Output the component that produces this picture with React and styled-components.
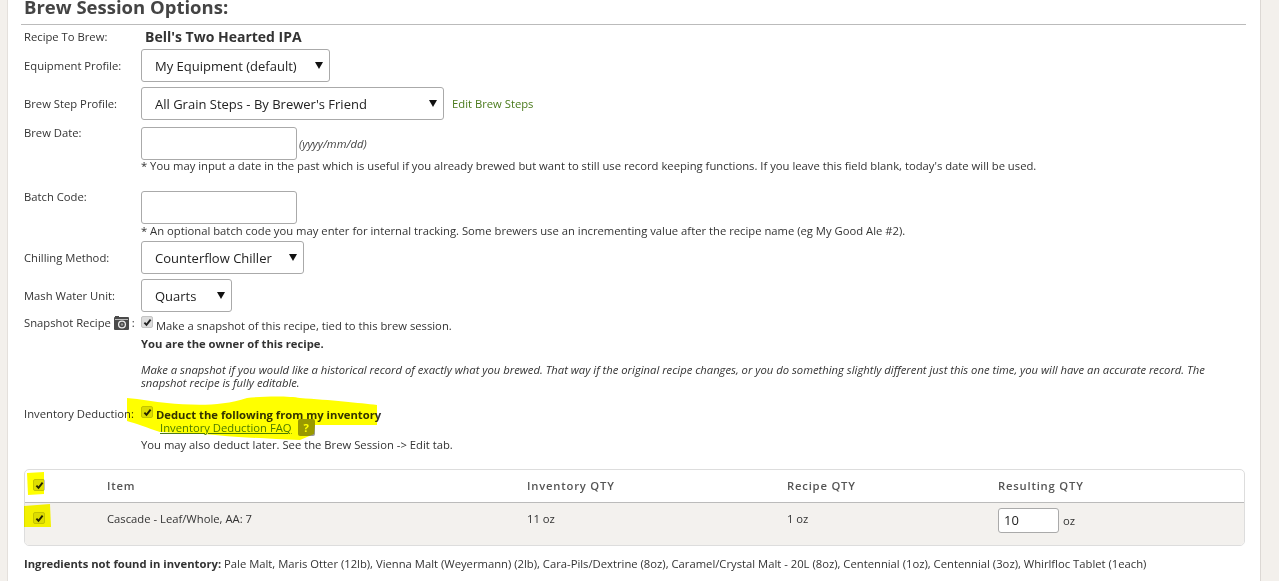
import React from "react";
import styled, { createGlobalStyle } from "styled-components";

const GlobalStyle = createGlobalStyle`
  html, body {
    margin: 0;
    height: 581px;
    overflow: hidden;
    background: #f3f0ec;
    font-family: "Open Sans", sans-serif;
    font-size: 11.25px;
    color: #333;
  }
`;

function Check() {
  return (
    <CheckBox>
      <svg width="9" height="9" viewBox="0 0 9 9">
        <path d="M1.4 4.6 L3.5 6.8 L7.6 1.6" fill="none" stroke="#222" strokeWidth="1.9" />
      </svg>
    </CheckBox>
  );
}

function Select({ label, width }) {
  return (
    <SelectWrap $width={width}>
      <SelectBox defaultValue={label}>
        <option>{label}</option>
      </SelectBox>
      <Arrow width="8" height="7" viewBox="0 0 8 7">
        <path d="M0 0 H8 L4 7 Z" fill="#111" />
      </Arrow>
    </SelectWrap>
  );
}

function CameraIcon() {
  return (
    <svg width="15" height="14" viewBox="0 0 15 14">
      <rect x="0" y="1" width="15" height="13" rx="1" fill="#4a4a4a" />
      <rect x="1" y="0" width="4" height="2" fill="#4a4a4a" />
      <rect x="1" y="3" width="13" height="1" fill="#bbb" />
      <circle cx="8" cy="8.5" r="3.4" fill="none" stroke="#eee" strokeWidth="1.3" />
      <circle cx="8" cy="8.5" r="1.2" fill="#999" />
    </svg>
  );
}

export default function App() {
  return (
    <Page>
      <GlobalStyle />
      <Content>
        <Heading>Brew Session Options:</Heading>

        <RecipeRow>
          <Label>Recipe To Brew:</Label>
          <RecipeName>Bell's Two Hearted IPA</RecipeName>
        </RecipeRow>

        <SelectRow $top={4}>
          <Label>Equipment Profile:</Label>
          <Select label="My Equipment (default)" width={189} />
        </SelectRow>

        <SelectRow $top={5}>
          <Label>Brew Step Profile:</Label>
          <Field>
            <Select label="All Grain Steps - By Brewer's Friend" width={303} />
            <EditLink>Edit Brew Steps</EditLink>
          </Field>
        </SelectRow>

        <InputRow $top={7}>
          <TopLabel>Brew Date:</TopLabel>
          <div>
            <Field>
              <TextInput />
              <Hint>(yyyy/mm/dd)</Hint>
            </Field>
            <Note $top={-1}>* You may input a date in the past which is useful if you already brewed but want to still use record keeping functions. If you leave this field blank, today's date will be used.</Note>
          </div>
        </InputRow>

        <InputRow $top={18}>
          <TopLabel>Batch Code:</TopLabel>
          <div>
            <TextInput />
            <Note>* An optional batch code you may enter for internal tracking. Some brewers use an incrementing value after the recipe name (eg My Good Ale #2).</Note>
          </div>
        </InputRow>

        <SelectRow $top={3}>
          <Label>Chilling Method:</Label>
          <Select label="Counterflow Chiller" width={163} />
        </SelectRow>

        <SelectRow $top={5}>
          <Label>Mash Water Unit:</Label>
          <Select label="Quarts" width={91} />
        </SelectRow>

        <SnapshotRow>
          <Label>
            <LabelInner>
              Snapshot Recipe <CameraIcon />:
            </LabelInner>
          </Label>
          <SnapshotBody>
            <CheckLine>
              <Check />
              <CheckText $top={2}>Make a snapshot of this recipe, tied to this brew session.</CheckText>
            </CheckLine>
            <Owner>You are the owner of this recipe.</Owner>
            <Explain>Make a snapshot if you would like a historical record of exactly what you brewed. That way if the original recipe changes, or you do something slightly different just this one time, you will have an accurate record. The snapshot recipe is fully editable.</Explain>
          </SnapshotBody>
        </SnapshotRow>

        <InventoryRow>
          <Label>Inventory Deduction:</Label>
          <div>
            <CheckLine>
              <Check />
              <CheckText as="strong" $top={1}>Deduct the following from my inventory</CheckText>
            </CheckLine>
            <FaqLine>
              <FaqLink>Inventory Deduction FAQ</FaqLink>
              <HelpBadge>?</HelpBadge>
            </FaqLine>
            <Later>You may also deduct later. See the Brew Session -&gt; Edit tab.</Later>
          </div>
        </InventoryRow>

        <InventoryTable>
          <HeadRow>
            <CheckCell><Check /></CheckCell>
            <div>Item</div>
            <div>Inventory QTY</div>
            <div>Recipe QTY</div>
            <div>Resulting QTY</div>
          </HeadRow>
          <BodyRow>
            <CheckCell><Check /></CheckCell>
            <div>Cascade - Leaf/Whole, AA: 7</div>
            <div>11 oz</div>
            <div>1 oz</div>
            <ResultCell>
              <QtyInput defaultValue="10" />
              <span>oz</span>
            </ResultCell>
          </BodyRow>
        </InventoryTable>

        <Missing>
          <strong>Ingredients not found in inventory:</strong> Pale Malt, Maris Otter (12lb), Vienna Malt (Weyermann) (2lb), Cara-Pils/Dextrine (8oz), Caramel/Crystal Malt - 20L (8oz), Centennial (1oz), Centennial (3oz), Whirlfloc Tablet (1each)
        </Missing>
      </Content>

      <Highlight width="1279" height="581" viewBox="0 0 1279 581">
        <path d="M127 398 C140 399 155 402 167 403 C190 405 220 407 247 398 C265 396 290 396 300 398 C330 400 360 403 377 405 L377 425 L315 425 L314 434 L300 440 C270 439 240 437 225 436 C200 433 175 433 160 432 C148 428 135 423 127 421 Z" fill="#ffff00" />
        <path d="M27 473 L44 472 L44 494 L28 495 Z" fill="#ffff00" />
        <path d="M24 506 L50 504 L51 527 L24 527 Z" fill="#ffff00" />
      </Highlight>
    </Page>
  );
}

const Page = styled.div`
  position: relative;
  height: 581px;
  overflow: hidden;
  background: #f3f0ec;
`;

const Content = styled.main`
  width: 1254px;
  height: 581px;
  margin-left: 7px;
  padding: 0 13px;
  box-sizing: border-box;
  background: #fff;
  border-left: 1px solid #e4e0dc;
  border-right: 1px solid #dcd8d4;
  overflow: hidden;
`;

const Heading = styled.h2`
  margin: -6px 0 0;
  height: 31px;
  line-height: 26px;
  font-size: 18.5px;
  font-weight: 700;
  color: #444;
  padding-left: 3px;
  border-bottom: 1px solid #bbb;
  box-sizing: border-box;
  width: 1225px;
`;

const Row = styled.div`
  display: grid;
  grid-template-columns: 117px 1fr;
  padding-left: 3px;
`;

const RecipeRow = styled(Row)`
  margin-top: 2px;
  align-items: center;
  height: 18px;
`;

const SelectRow = styled(Row)`
  align-items: center;
  margin-top: ${(p) => p.$top}px;
`;

const InputRow = styled(Row)`
  margin-top: ${(p) => p.$top}px;
`;

const SnapshotRow = styled(Row)`
  margin-top: 3px;
`;

const SnapshotBody = styled.div`
  padding-top: 1px;
`;

const InventoryRow = styled(Row)`
  margin-top: 17px;
`;

const Label = styled.div`
  line-height: 16px;
  color: #333;
`;

const TopLabel = styled(Label)`
  margin-top: -2px;
`;

const LabelInner = styled.span`
  display: inline-flex;
  align-items: center;
  gap: 3px;
`;

const RecipeName = styled.div`
  font-size: 14px;
  font-weight: 700;
  color: #333;
  padding-left: 4px;
`;

const Field = styled.div`
  display: flex;
  align-items: center;
`;

const SelectWrap = styled.div`
  position: relative;
  width: ${(p) => p.$width}px;
  height: 33px;
`;

const SelectBox = styled.select`
  appearance: none;
  width: 100%;
  height: 100%;
  padding: 0 13px;
  border: 1px solid #aaa;
  border-radius: 3px;
  background: #fff;
  font-family: "Open Sans", sans-serif;
  font-size: 13px;
  color: #222;
`;

const Arrow = styled.svg`
  position: absolute;
  right: 7px;
  top: 13px;
`;

const EditLink = styled.a`
  margin-left: 8px;
  color: #4a7a1c;
`;

const TextInput = styled.input`
  display: block;
  width: 156px;
  height: 33px;
  box-sizing: border-box;
  border: 1px solid #aaa;
  border-radius: 3px;
  background: #fff;
`;

const Hint = styled.em`
  margin-left: 2px;
  color: #444;
`;

const Note = styled.div`
  margin-top: ${(p) => p.$top || 0}px;
  height: 14px;
  line-height: 14px;
  color: #333;
`;

const CheckLine = styled.div`
  display: flex;
  align-items: flex-start;
  gap: 3px;
  line-height: 16px;
`;

const CheckText = styled.span`
  margin-top: ${(p) => p.$top}px;
`;

const CheckBox = styled.span`
  display: inline-flex;
  align-items: center;
  justify-content: center;
  width: 10px;
  height: 10px;
  background: #ddd;
  border: 1px solid #c4c4c4;
  border-radius: 2px;
  flex: none;
`;

const Owner = styled.div`
  margin-top: 2px;
  font-weight: 700;
  line-height: 16px;
`;

const Explain = styled.div`
  margin-top: 11px;
  font-style: italic;
  line-height: 13px;
  width: 1080px;
`;

const FaqLine = styled.div`
  display: flex;
  align-items: center;
  padding-left: 19px;
  height: 13px;
  margin-top: -2px;
`;

const FaqLink = styled.a`
  color: #4a7a1c;
  text-decoration: underline;
`;

const HelpBadge = styled.span`
  display: inline-flex;
  align-items: center;
  justify-content: center;
  width: 17px;
  height: 17px;
  margin-left: 6px;
  border-radius: 2px;
  background: #999;
  color: #fff;
  font-weight: 700;
`;

const Later = styled.div`
  margin-top: 4px;
  line-height: 14px;
`;

const InventoryTable = styled.div`
  margin: 17px 0 0 3px;
  width: 1219px;
  border: 1px solid #ddd;
  border-radius: 5px;
  overflow: hidden;
`;

const HeadRow = styled.div`
  display: grid;
  grid-template-columns: 82px 420px 260px 211px 1fr;
  height: 33px;
  padding-bottom: 2px;
  box-sizing: border-box;
  align-items: center;
  border-bottom: 1px solid #bbb;
  letter-spacing: 0.8px;
  font-weight: 600;
  color: #555;
`;

const BodyRow = styled.div`
  display: grid;
  grid-template-columns: 82px 420px 260px 211px 1fr;
  height: 42px;
  padding-bottom: 12px;
  box-sizing: border-box;
  align-items: center;
  background: #f3f1ee;
`;

const CheckCell = styled.div`
  padding-left: 8px;
  display: flex;
`;

const ResultCell = styled.div`
  display: flex;
  align-items: center;
  gap: 4px;
  margin-top: 4px;
`;

const QtyInput = styled.input`
  width: 61px;
  height: 25px;
  box-sizing: border-box;
  padding: 0 5px;
  border: 1px solid #aaa;
  border-radius: 3px;
  font-family: "Open Sans", sans-serif;
  font-size: 13px;
  color: #222;
`;

const Missing = styled.div`
  margin: 11px 0 0 3px;
  line-height: 14px;
  white-space: nowrap;
`;

const Highlight = styled.svg`
  position: absolute;
  left: 0;
  top: 0;
  pointer-events: none;
  mix-blend-mode: multiply;
`;
